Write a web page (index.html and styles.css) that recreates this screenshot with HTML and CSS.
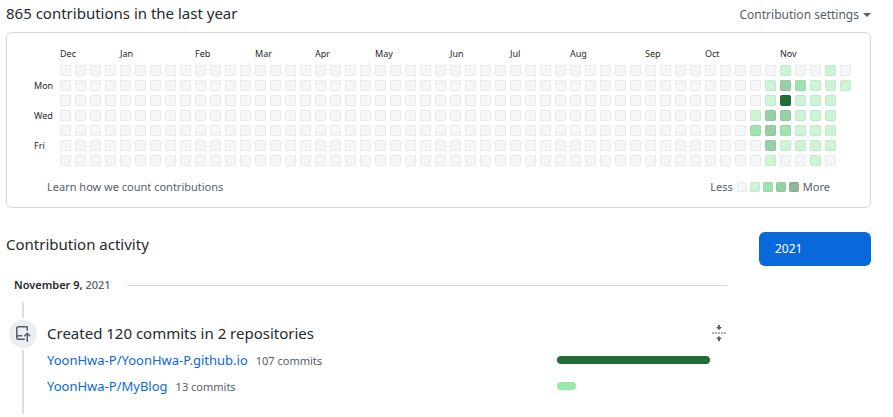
FILE: index.html
```html
<!DOCTYPE html>
<html lang="en">
<head>
<meta charset="utf-8">
<title>Contributions</title>
<link rel="stylesheet" href="styles.css">
</head>
<body>
<main class="page">
  <section>
    <header class="graph-header">
      <h2 class="title">865 contributions in the last year</h2>
      <button class="settings" type="button">Contribution settings <span class="caret"></span></button>
    </header>
    <div class="graph-box">
      <table class="calendar" aria-label="Contributions by day">
        <thead><tr id="months"><td class="corner"></td></tr></thead>
        <tbody id="days"></tbody>
      </table>
      <footer class="graph-footer">
        <a class="muted-link" href="#">Learn how we count contributions</a>
        <div class="legend">
          <span>Less</span>
          <ul class="swatches">
            <li class="swatch level-0"></li>
            <li class="swatch level-1"></li>
            <li class="swatch level-2"></li>
            <li class="swatch level-3"></li>
            <li class="swatch level-max"></li>
          </ul>
          <span>More</span>
        </div>
      </footer>
    </div>
  </section>

  <div class="activity">
    <section class="activity-main">
      <h2 class="title">Contribution activity</h2>
      <h3 class="date"><span>November 9, <span class="year">2021</span></span></h3>
      <article class="item">
        <div class="rail">
          <span class="rail-top"></span>
          <span class="badge">
            <svg width="16" height="16" viewBox="0 0 16 16" fill="currentColor" aria-hidden="true"><path fill-rule="evenodd" d="M1 2.5A2.5 2.5 0 013.500 0h8.750a.75.75 0 01.75.75v3.500a.75.75 0 01-1.500 0V1.500h-8a1 1 0 00-1 1v6.708A2.492 2.492 0 013.500 9h3.250a.75.75 0 010 1.500H3.500a1 1 0 100 2h5.750a.75.75 0 010 1.500H3.500A2.500 2.500 0 011 11.500v-9zm13.230 7.790a.75.75 0 001.060-1.060l-2.505-2.505a.75.75 0 00-1.060 0L9.220 9.229a.75.75 0 001.060 1.061l1.225-1.224v6.184a.75.75 0 001.500 0V9.066l1.224 1.224z"/></svg>
          </span>
          <span class="rail-bottom"></span>
        </div>
        <div class="item-body">
          <div class="item-head">
            <h4 class="title">Created 120 commits in 2 repositories</h4>
            <button class="fold" type="button" aria-label="Collapse">
              <svg width="16" height="16" viewBox="0 0 16 16" fill="currentColor" aria-hidden="true"><path d="M7 0h2v2h2L8 5 5 2h2zM7 16h2v-2h2l-3-3-3 3h2z"/><path opacity=".5" d="M1 7h2v2H1zM4 7h2v2H4zM7 7h2v2H7zM10 7h2v2h-2zM13 7h2v2h-2z"/></svg>
            </button>
          </div>
          <ul class="repos">
            <li class="repo">
              <span><a class="repo-link" href="#">YoonHwa-P/YoonHwa-P.github.io</a><a class="commits" href="#">107 commits</a></span>
              <span class="track"><span class="bar bar-dark" style="width: 90%"></span></span>
            </li>
            <li class="repo">
              <span><a class="repo-link" href="#">YoonHwa-P/MyBlog</a><a class="commits" href="#">13 commits</a></span>
              <span class="track"><span class="bar bar-light" style="width: 11%"></span></span>
            </li>
          </ul>
        </div>
      </article>
    </section>
    <nav class="years"><a class="year-button" href="#">2021</a></nav>
  </div>
</main>
<script src="calendar.js"></script>
</body>
</html>
```
FILE: calendar.js
```js
const months = [["Dec", 4], ["Jan", 5], ["Feb", 4], ["Mar", 4], ["Apr", 4], ["May", 5],
  ["Jun", 4], ["Jul", 4], ["Aug", 5], ["Sep", 4], ["Oct", 5], ["Nov", 5]];
const dayLabels = ["", "Mon", "", "Wed", "", "Fri", ""];
const quietWeeks = 46;
// Levels for the most recent weeks, one string per weekday.
const recent = ["0010010", "0132111", "014111", "133111", "232111", "031111", "010010"];

const monthRow = document.getElementById("months");
for (const [name, weeks] of months) {
  const th = document.createElement("th");
  th.colSpan = weeks;
  th.textContent = name;
  monthRow.append(th);
}

const body = document.getElementById("days");
recent.forEach((levels, day) => {
  const tr = document.createElement("tr");
  const th = document.createElement("th");
  th.textContent = dayLabels[day];
  tr.append(th);
  for (const level of "0".repeat(quietWeeks) + levels) {
    const td = document.createElement("td");
    td.className = "day level-" + level;
    tr.append(td);
  }
  body.append(tr);
});
```
FILE: styles.css
```css
* { box-sizing: border-box; }
body {
  margin: 0;
  background: #fff;
  color: #24292f;
  font: 12px/20px "Noto Sans", "Open Sans", sans-serif;
}
h2, h3, h4, ul { margin: 0; padding: 0; }
ul { list-style: none; }
a { color: inherit; text-decoration: none; }
button {
  border: 0;
  padding: 0;
  background: none;
  color: #57606a;
  font: inherit;
  cursor: pointer;
}
.page { padding: 0 22px 0 6px; }
.title { font-size: 15px; line-height: 24px; font-weight: 400; }

.graph-header {
  display: flex;
  justify-content: space-between;
  align-items: flex-end;
  height: 32px;
  padding-bottom: 7px;
}
.settings { display: flex; align-items: center; gap: 4px; }
.caret {
  border: 4px solid transparent;
  border-top-color: currentColor;
  border-bottom: 0;
}
.graph-box {
  border: 1px solid #d0d7de;
  border-radius: 6px;
  padding: 9px 40px 10px 23px;
}
.calendar {
  table-layout: fixed;
  width: 825px;
  border-spacing: 4px;
  font-size: 9px;
  line-height: 11px;
}
.calendar th { padding: 0; font-weight: 400; text-align: left; }
.calendar thead th { height: 15px; }
.corner { width: 22px; padding: 0; }
.day { height: 11px; padding: 0; }
.day, .swatch { border: 1px solid rgba(27, 31, 35, .06); border-radius: 2px; }
.level-0 { background: #f4f6f8; }
.level-1 { background: #cdf4d5; }
.level-2 { background: #9fe3b1; }
.level-3 { background: #98cfa7; }
.level-4 { background: #216e39; }
.level-max { background: #8fb59b; }
.graph-footer {
  display: flex;
  justify-content: space-between;
  padding: 7px 0 0 17px;
  color: #57606a;
  font-size: 11px;
}
.legend { display: flex; align-items: center; gap: 4px; }
.swatches { display: flex; gap: 3px; }
.swatch { width: 10px; height: 10px; }

.activity { display: flex; gap: 32px; padding-top: 24px; }
.activity-main { flex: 1; }
.date {
  display: flex;
  align-items: center;
  gap: 16px;
  margin: 19px 0 7px;
  padding-left: 8px;
  font-size: 11px;
  font-weight: 600;
}
.date::after { content: ""; flex: 1; height: 1px; background: #d0d7de; }
.year { color: #57606a; font-weight: 500; }
.item { display: flex; gap: 10px; padding-left: 3px; }
.rail { display: flex; flex-direction: column; align-items: center; gap: 2px; }
.rail-top, .rail-bottom { width: 2px; background: #d8dee4; }
.rail-top { height: 16px; }
.rail-bottom { flex: 1; }
.badge {
  display: grid;
  place-items: center;
  width: 28px;
  height: 28px;
  border-radius: 50%;
  background: #eaeef2;
  color: #57606a;
}
.item-body { flex: 1; padding: 19px 0 15px; }
.item-head { display: flex; justify-content: space-between; align-items: center; }
.fold { display: flex; }
.repos { padding-top: 2px; }
.repo {
  display: flex;
  justify-content: space-between;
  align-items: center;
  height: 26px;
}
.repo-link { color: #0969da; font-size: 13px; }
.commits { margin-left: 8px; color: #57606a; font-size: 11px; }
.track { width: 25%; }
.bar { display: block; height: 8px; border-radius: 4px; }
.bar-dark { background: #216e39; }
.bar-light { background: #9be9a8; }
.years { width: 112px; }
.year-button {
  display: block;
  padding: 7px 16px;
  border-radius: 6px;
  background: #0969da;
  color: #fff;
}
```
